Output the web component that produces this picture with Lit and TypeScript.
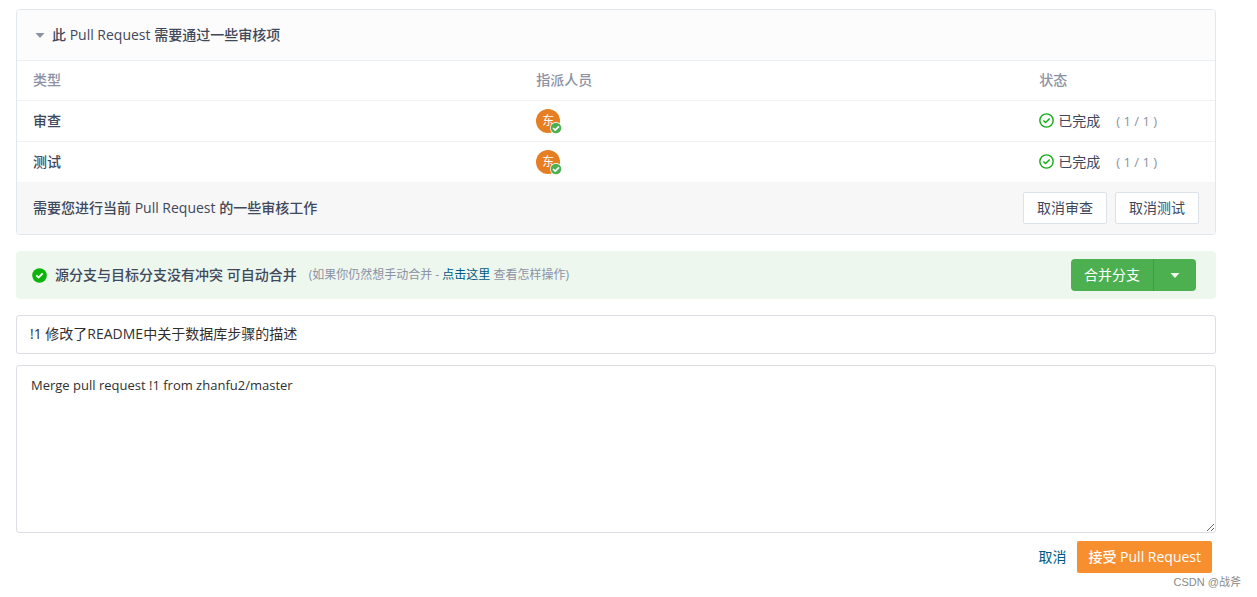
import { LitElement, html, css, svg } from "lit";
import { customElement, property, state } from "lit/decorators.js";

const checkPath = svg`<path d="M4.6 7.9 7 10.2 11.4 5.8" fill="none"></path>`;

@customElement("member-avatar")
export class MemberAvatar extends LitElement {
  static styles = css`
    :host {
      display: inline-block;
      position: relative;
      width: 24px;
      height: 24px;
      border-radius: 50%;
      background: #e67e22;
      color: #fff;
      font-size: 12px;
      font-weight: 400;
      line-height: 24px;
      text-align: center;
      vertical-align: middle;
    }
    .badge {
      position: absolute;
      right: -2px;
      bottom: -1px;
      width: 12px;
      height: 12px;
    }
  `;

  @property() name = "";

  render() {
    return html`${this.name}<svg class="badge" viewBox="0 0 12 12" aria-hidden="true">
        <circle cx="6" cy="6" r="6" fill="#fff"></circle>
        <circle cx="6" cy="6" r="5.3" fill="#4caf50"></circle>
        <path d="M3 6 5.2 8.1 9 4.3" fill="none" stroke="#fff" stroke-width="1.7"></path>
      </svg>`;
  }
}

interface ReviewItem {
  type: string;
  assignee: string;
  done: number;
  total: number;
}

@customElement("app-root")
export class AppRoot extends LitElement {
  static styles = css`
    :host {
      display: block;
      position: relative;
      box-sizing: border-box;
      padding: 9px 41px 24px 16px;
      font-family: "Open Sans", "Noto Sans CJK SC", sans-serif;
      font-size: 14px;
      line-height: 20px;
      color: #40485b;
    }
    * {
      box-sizing: border-box;
    }
    a {
      color: #005980;
      text-decoration: none;
    }
    button,
    input,
    textarea {
      font: inherit;
    }
    button {
      cursor: pointer;
    }
    .panel {
      border: 1px solid #dfe6ec;
      border-radius: 4px;
      overflow: hidden;
    }
    .panel-head {
      display: flex;
      align-items: center;
      gap: 7px;
      width: 100%;
      height: 51px;
      padding: 0 18px;
      border: 0;
      border-bottom: 1px solid #eaf0f4;
      background: #fcfcfc;
      color: inherit;
      font-weight: 500;
      text-align: left;
    }
    .caret {
      width: 10px;
      height: 5px;
      flex: none;
    }
    .panel-head .caret {
      fill: #8c92a4;
    }
    .folded .caret {
      transform: rotate(-90deg);
    }
    .reviews {
      width: 100%;
      table-layout: fixed;
      border-collapse: collapse;
    }
    .reviews th,
    .reviews td {
      height: 41px;
      padding: 0 16px;
      text-align: left;
      font-weight: 500;
      vertical-align: middle;
    }
    .reviews thead th {
      height: 39px;
      color: #8c92a4;
    }
    .reviews tbody tr {
      border-top: 1px solid #f0f2f4;
    }
    .wide {
      width: 42%;
    }
    .status {
      display: flex;
      align-items: center;
      gap: 4px;
      font-weight: 400;
    }
    .count {
      margin-left: 12px;
      color: #8c92a4;
      font-size: 13px;
    }
    .icon {
      width: 15px;
      height: 15px;
      flex: none;
    }
    .panel-foot {
      display: flex;
      align-items: center;
      gap: 8px;
      height: 52px;
      padding: 0 16px;
      background: #f7f7f7;
    }
    .panel-foot span {
      flex: 1;
      font-weight: 500;
    }
    .basic {
      height: 32px;
      padding: 0 13px;
      border: 1px solid #dce3e8;
      border-radius: 2px;
      background: #fff;
      color: #40485b;
    }
    .notice {
      display: flex;
      align-items: center;
      height: 48px;
      margin-top: 16px;
      padding: 0 20px 0 16px;
      border-radius: 4px;
      background: #edf7ee;
    }
    .notice strong {
      margin: 0 12px 0 8px;
      font-weight: 500;
    }
    .hint {
      flex: 1;
      font-size: 12px;
      color: #8c92a4;
    }
    .merge {
      display: flex;
      border-radius: 4px;
      overflow: hidden;
    }
    .merge button {
      display: flex;
      align-items: center;
      justify-content: center;
      height: 32px;
      padding: 0 13px;
      border: 0;
      background: #4caf50;
      color: #fff;
    }
    .merge .more {
      width: 43px;
      border-left: 1px solid #439a47;
    }
    .merge .caret {
      fill: #f0f8f0;
    }
    .field {
      display: block;
      width: 100%;
      padding: 9px 14px;
      border: 1px solid #dcdde6;
      border-radius: 3px;
      outline: 0;
      background: #fff;
      color: #303030;
    }
    .title {
      height: 39px;
      margin-top: 16px;
      padding: 7px 13px 10px;
    }
    .message {
      height: 168px;
      margin-top: 11px;
      resize: vertical;
      font-size: 13px;
    }
    .actions {
      display: flex;
      align-items: center;
      justify-content: flex-end;
      gap: 11px;
      margin-top: 8px;
      padding-right: 4px;
    }
    .accept {
      height: 32px;
      padding: 0 11px;
      border: 0;
      border-radius: 2px;
      background: #f78f2e;
      color: #fff;
      font-weight: 500;
    }
    .credit {
      position: absolute;
      right: 16px;
      bottom: 7px;
      font-family: "Liberation Sans", "Noto Sans CJK SC", sans-serif;
      font-size: 11px;
      line-height: 16px;
      color: #8a8a8a;
    }
  `;

  @state() private open = true;

  private items: ReviewItem[] = [
    { type: "审查", assignee: "东", done: 1, total: 1 },
    { type: "测试", assignee: "东", done: 1, total: 1 },
  ];

  private caret() {
    return html`<svg class="caret" viewBox="0 0 10 5" aria-hidden="true">
      <path d="M0.5 0h9L5 5z"></path>
    </svg>`;
  }

  private row(item: ReviewItem) {
    return html`<tr>
      <th scope="row">${item.type}</th>
      <td><member-avatar name=${item.assignee}></member-avatar></td>
      <td>
        <div class="status">
          <svg class="icon" viewBox="0 0 16 16" stroke="#13ae13" stroke-width="1.5" aria-hidden="true">
            <circle cx="8" cy="8" r="7.1" fill="none"></circle>
            ${checkPath}
          </svg>
          <span>已完成</span>
          <span class="count">( ${item.done} / ${item.total} )</span>
        </div>
      </td>
    </tr>`;
  }

  render() {
    return html`
      <section class="panel">
        <button
          class="panel-head ${this.open ? "" : "folded"}"
          aria-expanded=${this.open}
          @click=${() => (this.open = !this.open)}
        >
          ${this.caret()}<span>此 Pull Request 需要通过一些审核项</span>
        </button>
        <table class="reviews" ?hidden=${!this.open}>
          <thead>
            <tr>
              <th class="wide" scope="col">类型</th>
              <th class="wide" scope="col">指派人员</th>
              <th scope="col">状态</th>
            </tr>
          </thead>
          <tbody>
            ${this.items.map((item) => this.row(item))}
          </tbody>
        </table>
        <div class="panel-foot">
          <span>需要您进行当前 Pull Request 的一些审核工作</span>
          <button class="basic">取消审查</button>
          <button class="basic">取消测试</button>
        </div>
      </section>

      <section class="notice">
        <svg class="icon" viewBox="0 0 16 16" stroke="#fff" stroke-width="2" aria-hidden="true">
          <circle cx="8" cy="8" r="7.8" fill="#0db30d" stroke="none"></circle>
          ${checkPath}
        </svg>
        <strong>源分支与目标分支没有冲突 可自动合并</strong>
        <span class="hint">(如果你仍然想手动合并 - <a href="#manual">点击这里</a> 查看怎样操作)</span>
        <div class="merge">
          <button>合并分支</button>
          <button class="more" aria-label="更多合并方式">${this.caret()}</button>
        </div>
      </section>

      <form @submit=${(e: Event) => e.preventDefault()}>
        <input
          class="field title"
          type="text"
          aria-label="标题"
          .value=${"!1 修改了README中关于数据库步骤的描述"}
        />
        <textarea
          class="field message"
          aria-label="描述"
          .value=${"Merge pull request !1 from zhanfu2/master"}
        ></textarea>
        <div class="actions">
          <a href="#cancel">取消</a>
          <button class="accept" type="submit">接受 Pull Request</button>
        </div>
      </form>
      <span class="credit">CSDN @战斧</span>
    `;
  }
}
